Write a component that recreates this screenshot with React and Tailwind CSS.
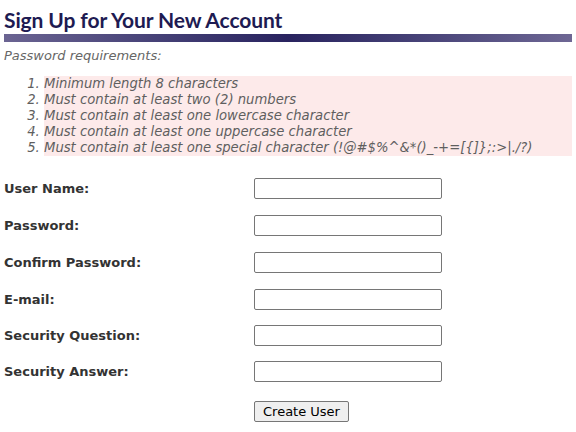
export default function App() {
  const reqs = [
    "Minimum length 8 characters",
    "Must contain at least two (2) numbers",
    "Must contain at least one lowercase character",
    "Must contain at least one uppercase character",
    "Must contain at least one special character (!@#$%^&*()_-+=[{]};:>|./?)",
  ];
  const fields = [
    ["User Name:", "mt-0"],
    ["Password:", "mt-[16px]"],
    ["Confirm Password:", "mt-[16px]"],
    ["E-mail:", "mt-[16px]"],
    ["Security Question:", "mt-[15px]"],
    ["Security Answer:", "mt-[15px]"],
  ];
  return (
    <div className="w-[576px] h-[432px] bg-white px-[4px] font-['DejaVu_Sans',Verdana,sans-serif] text-[13px] overflow-hidden">
      <h1 className="pt-[8px] h-[34px] leading-[24px] text-[21px] font-bold text-[#1e1b52] font-['Lato',sans-serif] tracking-[-0.1px]">
        Sign Up for Your New Account
      </h1>
      <div className="h-[8px] bg-gradient-to-r from-[#6b6492] via-[#29235f] to-[#6e6794]" />
      <p className="mt-[6px] leading-[16px] italic text-[#666]">Password requirements:</p>
      <ol className="mt-[12px] ml-[40px] list-decimal bg-[#fdeaea] leading-[16px] italic text-[#5f5f5f] text-[13.2px]">
        {reqs.map((r) => (
          <li key={r}>{r}</li>
        ))}
      </ol>
      <div className="mt-[22px] flex flex-col">
        {fields.map(([f, m]) => (
          <div key={f} className={`flex items-center h-[21px] ${m}`}>
            <label className="w-[250px] font-bold text-[#333]">{f}</label>
            <input
              type="text"
              className="w-[188px] h-[21px] border border-[#767676] rounded-[2px] bg-white"
            />
          </div>
        ))}
        <div className="flex mt-[19px]">
          <div className="w-[250px]" />
          <button className="h-[21px] px-[8px] border border-[#767676] rounded-[2px] bg-[#efefef] text-black leading-[17px]">
            Create User
          </button>
        </div>
      </div>
    </div>
  );
}
